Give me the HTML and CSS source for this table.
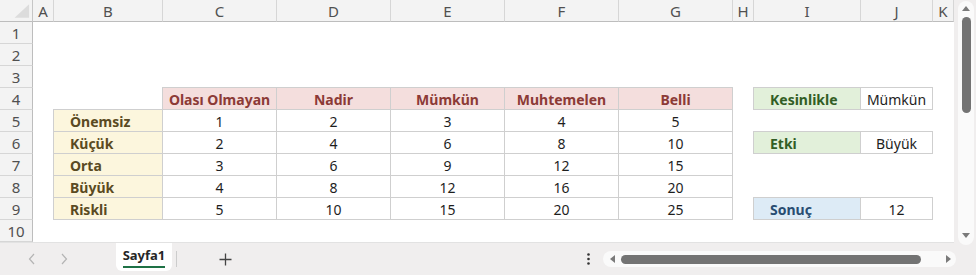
FILE: index.html
```html
<!DOCTYPE html>
<html lang="tr">
<head>
<meta charset="utf-8">
<title>Sayfa1</title>
<link rel="stylesheet" href="styles.css">
</head>
<body>
<div class="top">
  <div class="sheet">
    <div class="corner"><svg width="33" height="22" viewBox="0 0 33 22"><polygon points="15,18 30,18 30,4" fill="#dcdcdc"/></svg></div>
    <div class="ch">A</div><div class="ch">B</div><div class="ch">C</div><div class="ch">D</div><div class="ch">E</div><div class="ch">F</div><div class="ch">G</div><div class="ch">H</div><div class="ch">I</div><div class="ch">J</div><div class="ch">K</div>

    <div class="rh">1</div><div></div><div></div><div></div><div></div><div></div><div></div><div></div><div></div><div></div><div></div><div></div>
    <div class="rh">2</div><div></div><div></div><div></div><div></div><div></div><div></div><div></div><div></div><div></div><div></div><div></div>
    <div class="rh">3</div><div></div><div></div><div></div><div></div><div></div><div></div><div></div><div></div><div></div><div></div><div></div>

    <div class="rh">4</div><div></div><div></div>
    <div class="cell hd">Olası Olmayan</div><div class="cell hd">Nadir</div><div class="cell hd">Mümkün</div><div class="cell hd">Muhtemelen</div><div class="cell hd">Belli</div>
    <div></div><div class="cell lbl green">Kesinlikle</div><div class="cell val">Mümkün</div><div></div>

    <div class="rh">5</div><div></div><div class="cell row">Önemsiz</div>
    <div class="cell val">1</div><div class="cell val">2</div><div class="cell val">3</div><div class="cell val">4</div><div class="cell val">5</div>
    <div></div><div></div><div></div><div></div>

    <div class="rh">6</div><div></div><div class="cell row">Küçük</div>
    <div class="cell val">2</div><div class="cell val">4</div><div class="cell val">6</div><div class="cell val">8</div><div class="cell val">10</div>
    <div></div><div class="cell lbl green">Etki</div><div class="cell val">Büyük</div><div></div>

    <div class="rh">7</div><div></div><div class="cell row">Orta</div>
    <div class="cell val">3</div><div class="cell val">6</div><div class="cell val">9</div><div class="cell val">12</div><div class="cell val">15</div>
    <div></div><div></div><div></div><div></div>

    <div class="rh">8</div><div></div><div class="cell row">Büyük</div>
    <div class="cell val">4</div><div class="cell val">8</div><div class="cell val">12</div><div class="cell val">16</div><div class="cell val">20</div>
    <div></div><div></div><div></div><div></div>

    <div class="rh">9</div><div></div><div class="cell row">Riskli</div>
    <div class="cell val">5</div><div class="cell val">10</div><div class="cell val">15</div><div class="cell val">20</div><div class="cell val">25</div>
    <div></div><div class="cell lbl blue">Sonuç</div><div class="cell val">12</div><div></div>

    <div class="rh">10</div><div></div><div></div><div></div><div></div><div></div><div></div><div></div><div></div><div></div><div></div><div></div>
  </div>
  <div class="vscroll">
    <div class="vtrack">
      <svg class="varrow" width="8" height="5" viewBox="0 0 8 5"><polygon points="0,5 8,5 4,0" fill="#7a7a7a"/></svg>
      <div class="vthumb"></div>
      <svg class="varrow down" width="8" height="5" viewBox="0 0 8 5"><polygon points="0,0 8,0 4,5" fill="#7a7a7a"/></svg>
    </div>
  </div>
</div>
<div class="tabbar">
  <svg class="nav first" width="8" height="12" viewBox="0 0 8 12"><polyline points="6,1 1.5,6 6,11" fill="none" stroke="#b4b4b4" stroke-width="1.2"/></svg>
  <svg class="nav second" width="8" height="12" viewBox="0 0 8 12"><polyline points="2,1 6.5,6 2,11" fill="none" stroke="#b4b4b4" stroke-width="1.2"/></svg>
  <div class="tab"><span class="tabname">Sayfa1</span></div>
  <div class="sep"></div>
  <svg class="plus" width="13" height="13" viewBox="0 0 13 13"><path d="M6.5 0.5V12.5M0.5 6.5H12.5" stroke="#444" stroke-width="1.3"/></svg>
  <svg class="dots" width="3" height="12" viewBox="0 0 3 12"><circle cx="1.5" cy="1.5" r="1.3" fill="#333"/><circle cx="1.5" cy="6" r="1.3" fill="#333"/><circle cx="1.5" cy="10.5" r="1.3" fill="#333"/></svg>
  <div class="htrack">
    <svg class="harrow" width="5" height="8" viewBox="0 0 5 8"><polygon points="5,0 5,8 0,4" fill="#7a7a7a"/></svg>
    <div class="hthumb"></div>
    <svg class="harrow right" width="5" height="8" viewBox="0 0 5 8"><polygon points="0,0 0,8 5,4" fill="#7a7a7a"/></svg>
  </div>
</div>
</body>
</html>
```
FILE: styles.css
```css
* { box-sizing: border-box; }
html, body { margin: 0; padding: 0; }
body {
  width: 976px;
  height: 275px;
  overflow: hidden;
  background: #f0eeee;
  font-family: "Noto Sans", "Open Sans", sans-serif;
}
.top {
  display: flex;
  height: 243px;
}
.sheet {
  width: 954px;
  height: 243px;
  background: #ffffff;
  display: grid;
  grid-template-columns: 33px 21px 109px 114px 114px 114px 114px 114px 21px 107px 72px 21px;
  grid-template-rows: repeat(11, 22px);
  align-content: start;
  border-bottom: 1px solid #e2e2e2;
}
.corner {
  background: #f3f3f3;
  border-right: 1px solid #c6c6c6;
  border-bottom: 1px solid #bdbdbd;
  display: flex;
}
.ch {
  background: #f3f3f3;
  border-right: 1px solid #d6d6d6;
  border-bottom: 1px solid #bdbdbd;
  color: #505050;
  font-size: 15px;
  display: flex;
  align-items: center;
  justify-content: center;
  padding-top: 1px;
}
.rh {
  background: #f3f3f3;
  border-right: 1px solid #bdbdbd;
  border-bottom: 1px solid #d6d6d6;
  color: #505050;
  font-size: 15px;
  display: flex;
  align-items: center;
  justify-content: center;
  padding-top: 1px;
}
.cell {
  margin: -1px 0 0 -1px;
  border: 1px solid #cfcfcf;
  font-size: 14px;
  display: flex;
  align-items: center;
  white-space: nowrap;
  overflow: hidden;
  padding-top: 1px;
}
.hd {
  background: #f4dedd;
  color: #8c3a36;
  font-weight: 700;
  justify-content: center;
}
.row {
  background: #fcf6dd;
  color: #5a4a22;
  font-weight: 700;
  padding-left: 16px;
}
.lbl {
  font-weight: 700;
  padding-left: 16px;
}
.green {
  background: #e2f0da;
  color: #325e25;
}
.blue {
  background: #ddebf6;
  color: #284d72;
}
.val {
  background: #ffffff;
  color: #1e1e1e;
  justify-content: center;
}
.vscroll {
  width: 22px;
  padding: 1px 2px 0 4px;
}
.vtrack {
  width: 16px;
  height: 244px;
  background: #fafafa;
  border-radius: 8px;
  display: flex;
  flex-direction: column;
  align-items: center;
}
.varrow {
  margin-top: 5px;
  flex: none;
}
.varrow.down {
  margin-top: auto;
  margin-bottom: 7px;
}
.vthumb {
  width: 9px;
  height: 96px;
  margin-top: 6px;
  background: #737373;
  border-radius: 5px;
  flex: none;
}
.tabbar {
  height: 32px;
  display: flex;
  align-items: center;
}
.nav { flex: none; }
.nav.first { margin-left: 28px; }
.nav.second { margin-left: 24px; }
.tab {
  align-self: flex-start;
  margin-left: 48px;
  width: 56px;
  height: 28px;
  background: #ffffff;
  border-radius: 0 0 6px 6px;
  display: flex;
  justify-content: center;
  padding-top: 3px;
}
.tabname {
  font-size: 13px;
  font-weight: 700;
  color: #262626;
  height: 22px;
  line-height: 19px;
  border-bottom: 2px solid #1e7145;
}
.sep {
  margin-left: 4px;
  width: 1px;
  height: 16px;
  background: #cccccc;
}
.plus {
  margin-left: 42px;
  flex: none;
}
.dots {
  margin-left: 355px;
  flex: none;
}
.htrack {
  margin-left: 13px;
  width: 353px;
  height: 16px;
  background: #fafafa;
  border-radius: 8px;
  display: flex;
  align-items: center;
  padding: 0 5px 0 7px;
}
.harrow { flex: none; }
.hthumb {
  margin-left: 6px;
  width: 300px;
  height: 9px;
  background: #737373;
  border-radius: 5px;
}
.harrow.right { margin-left: auto; }
```
